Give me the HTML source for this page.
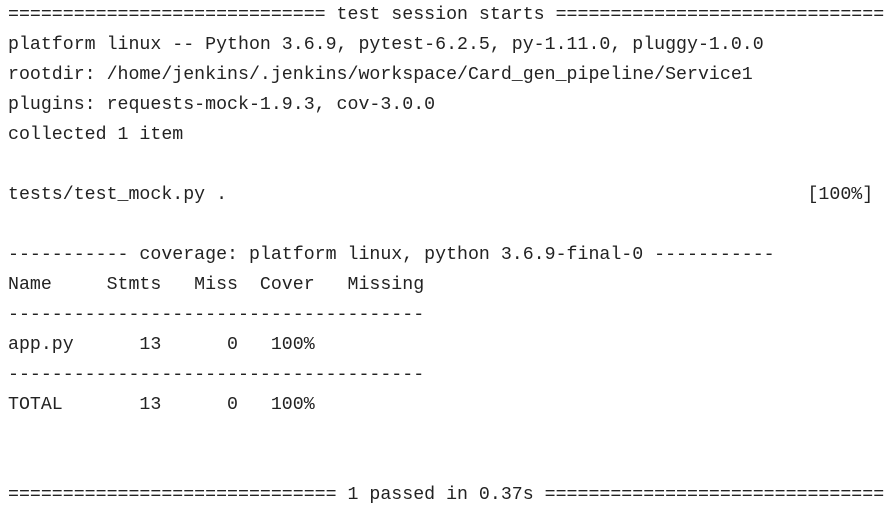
<!DOCTYPE html>
<html><head><meta charset="utf-8"><style>
html,body{margin:0;padding:0;background:#fff;width:894px;height:508px;overflow:hidden}
pre{margin:0;padding:0 0 0 8px;font-family:"Liberation Mono",monospace;font-size:18.25px;line-height:30px;color:#222;white-space:pre}
</style></head><body><pre>============================= test session starts ==============================
platform linux -- Python 3.6.9, pytest-6.2.5, py-1.11.0, pluggy-1.0.0
rootdir: /home/jenkins/.jenkins/workspace/Card_gen_pipeline/Service1
plugins: requests-mock-1.9.3, cov-3.0.0
collected 1 item

tests/test_mock.py .                                                     [100%]

----------- coverage: platform linux, python 3.6.9-final-0 -----------
Name     Stmts   Miss  Cover   Missing
--------------------------------------
app.py      13      0   100%
--------------------------------------
TOTAL       13      0   100%


============================== 1 passed in 0.37s ===============================</pre></body></html>
